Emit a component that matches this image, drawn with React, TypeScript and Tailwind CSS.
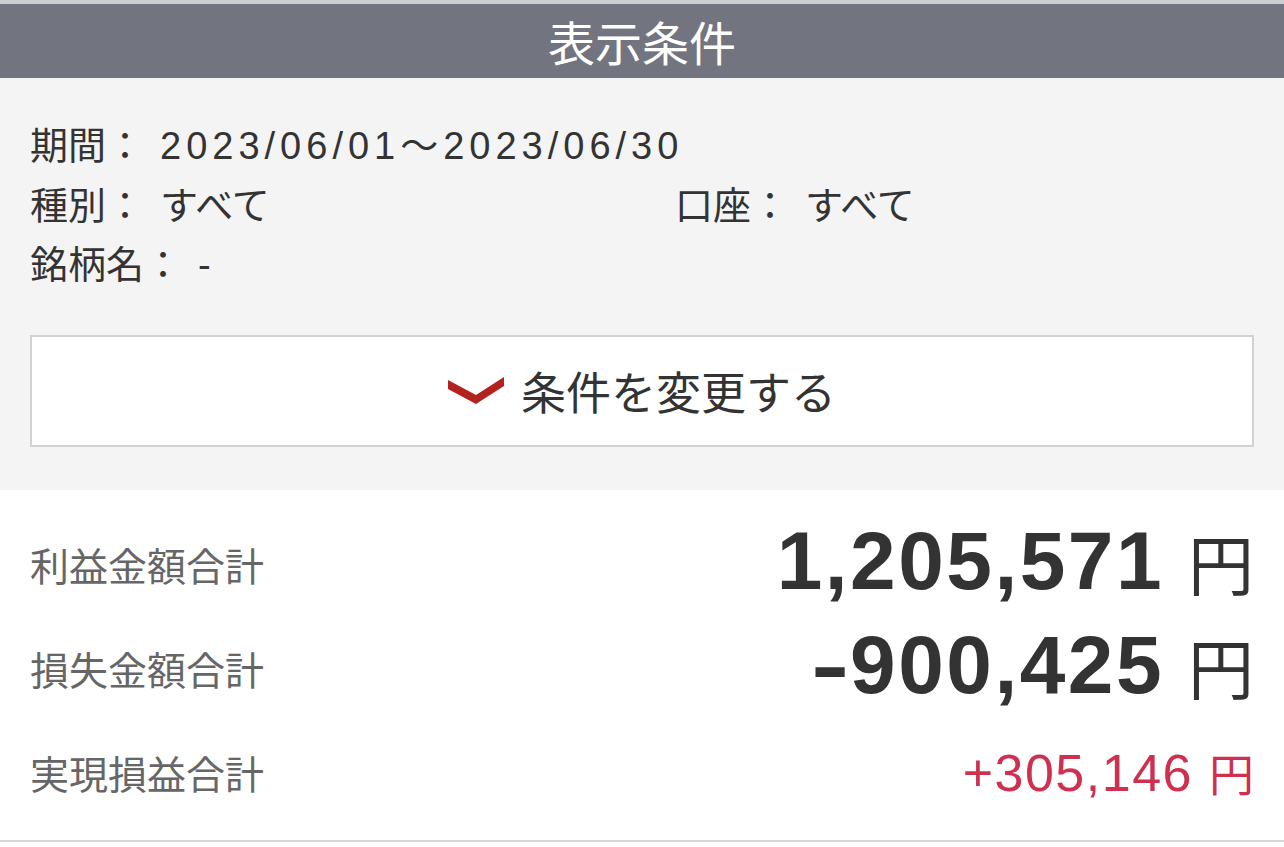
const jp = "font-['Liberation_Sans','Noto_Sans_CJK_JP',sans-serif]";

const Chevron = () => (
  <svg width="56" height="28" viewBox="0 0 56 28" className="shrink-0">
    <polygon points="0,3 28,18 56,0 56,9 28,27 0,12" fill="#b3221e" />
  </svg>
);

const InfoLabel = ({ children }: { children: React.ReactNode }) => (
  <span className="shrink-0">{children}</span>
);

const BigNumber = ({ value }: { value: string }) => {
  // the minus sign is drawn wider in the original font
  if (value.startsWith('-')) {
    return (
      <span className="text-[82px] font-bold tracking-[2.5px] leading-none font-['Liberation_Sans',sans-serif]">
        <span className="mr-[12px] inline-block origin-left scale-x-[1.4] tracking-normal">-</span>
        {value.slice(1)}
      </span>
    );
  }
  return (
    <span className="text-[82px] font-bold tracking-[2.5px] leading-none font-['Liberation_Sans',sans-serif]">
      {value}
    </span>
  );
};

const SummaryRow = ({
  label,
  value,
  big,
  red,
}: {
  label: string;
  value: string;
  big?: boolean;
  red?: boolean;
}) => (
  <div className="flex h-[104px] items-center justify-between">
    <span className="text-[39px] text-[#666666] font-['Noto_Sans_CJK_JP',sans-serif]">{label}</span>
    {big ? (
      <div className="flex items-center text-[#333333] -mt-2">
        <BigNumber value={value} />
        <span className="ml-6 text-[66px] leading-none font-['Noto_Sans_CJK_JP',sans-serif]">円</span>
      </div>
    ) : (
      <div className={`flex items-center ${red ? 'text-[#cf3050]' : 'text-[#333333]'}`}>
        <span className="text-[52px] leading-none tracking-[1.5px] font-['Liberation_Sans',sans-serif]">{value}</span>
        <span className="ml-4 text-[45px] leading-none font-['Noto_Sans_CJK_JP',sans-serif]">円</span>
      </div>
    )}
  </div>
);

const App = () => {
  return (
    <div className={`w-[1284px] h-[847px] overflow-hidden bg-white ${jp}`}>
      <div className="h-1 bg-[#cdd0d2]" />

      {/* Header */}
      <div className="flex h-[74px] items-center justify-center bg-[#72757f]">
        <span className="text-[47px] text-white font-['Noto_Sans_CJK_JP',sans-serif]">表示条件</span>
      </div>

      {/* Conditions */}
      <div className="bg-[#f4f4f4] px-[30px] pt-[39px] pb-[43px]">
        <div className="text-[38px] leading-[59.5px] text-[#333333]">
          <div className="flex gap-4">
            <InfoLabel>期間：</InfoLabel>
            <span className="tracking-[5px]">2023/06/01～2023/06/30</span>
          </div>
          <div className="grid grid-cols-[645px_1fr]">
            <div className="flex gap-4">
              <InfoLabel>種別：</InfoLabel>
              <span>すべて</span>
            </div>
            <div className="flex gap-4">
              <InfoLabel>口座：</InfoLabel>
              <span>すべて</span>
            </div>
          </div>
          <div className="flex gap-4">
            <InfoLabel>銘柄名：</InfoLabel>
            <span>-</span>
          </div>
        </div>

        <button className="mt-[39px] flex h-[112px] w-full items-center justify-center gap-[17px] border-2 border-[#d2d2d2] bg-white">
          <Chevron />
          <span className="text-[45px] text-[#333333] font-['Noto_Sans_CJK_JP',sans-serif]">条件を変更する</span>
        </button>
      </div>

      {/* Summary */}
      <div className="border-b-2 border-[#d6d6d6] px-[30px] pt-[23px] pb-[15px]">
        <SummaryRow label="利益金額合計" value="1,205,571" big />
        <SummaryRow label="損失金額合計" value="-900,425" big />
        <SummaryRow label="実現損益合計" value="+305,146" red />
      </div>
    </div>
  );
};

export default App;
